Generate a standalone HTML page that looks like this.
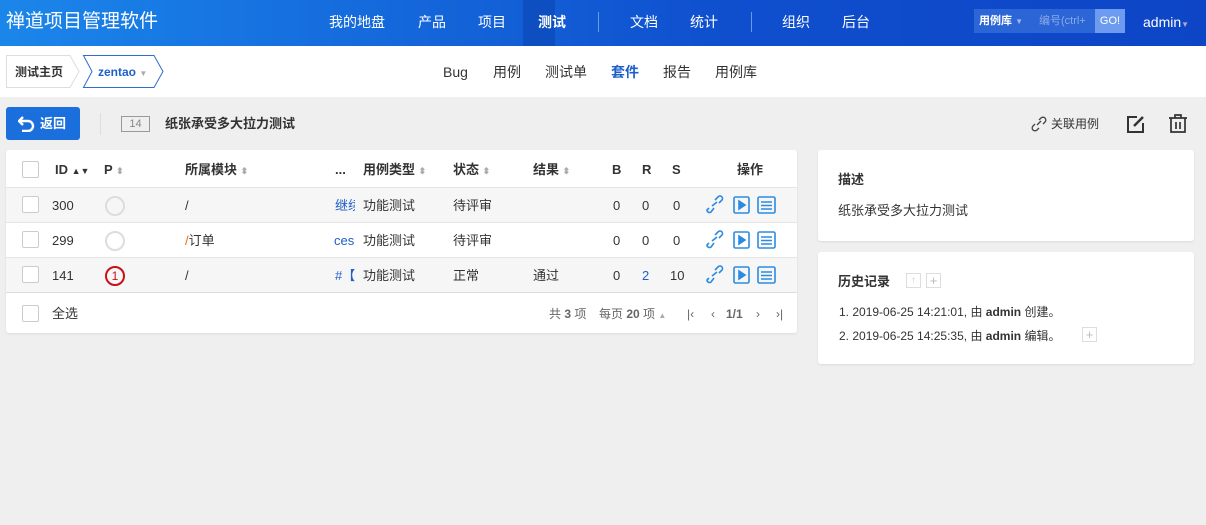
<!DOCTYPE html>
<html><head><meta charset="utf-8"><style>
*{margin:0;padding:0;box-sizing:border-box}
body{width:1206px;height:525px;background:#efefef;font-family:"Liberation Sans","Noto Sans CJK SC",sans-serif;font-size:13px;line-height:16px;color:#333;position:relative;overflow:hidden}
.abs{position:absolute}
#hd{left:0;top:0;width:1206px;height:46px;background:linear-gradient(90deg,#1b86ea,#0f4fce 60%,#0d45c6)}
#hd .t{color:#fff;font-size:14px;top:13px;line-height:18px}
#sub{left:0;top:46px;width:1206px;height:51px;background:#fff}
.panel{background:#fff;border-radius:3px;box-shadow:0 1px 2px rgba(0,0,0,.08)}
.cb{position:absolute;width:17px;height:17px;border:1px solid #ccc;border-radius:2px;background:#fff}
.row{position:absolute;left:0;width:791px;height:35px;border-top:1px solid #e5e5e5}
.row span{position:absolute;top:10px}
.sort{color:#aaa;font-size:9px}
</style></head><body>
<div id="hd" class="abs">
 <div class="abs" style="left:6px;top:11px;color:#fff;font-size:19px;line-height:22px">禅道项目管理软件</div>
 <div class="abs t" style="left:329px">我的地盘</div>
 <div class="abs t" style="left:418px">产品</div>
 <div class="abs t" style="left:478px">项目</div>
 <div class="abs" style="left:523px;top:0;width:32px;height:46px;background:#0d4fc0"></div>
 <div class="abs t" style="left:538px;font-weight:bold">测试</div>
 <div class="abs" style="left:598px;top:12px;width:1px;height:20px;background:#6a9ae8"></div>
 <div class="abs t" style="left:630px">文档</div>
 <div class="abs t" style="left:690px">统计</div>
 <div class="abs" style="left:751px;top:12px;width:1px;height:20px;background:#6a9ae8"></div>
 <div class="abs t" style="left:782px">组织</div>
 <div class="abs t" style="left:842px">后台</div>
 <div class="abs" style="left:974px;top:9px;width:151px;height:24px;background:#2c65d6"></div>
 <div class="abs" style="left:979px;top:14px;color:#fff;font-size:11px;font-weight:bold;line-height:14px">用例库 <span style="color:#9bb8ee;font-size:8px">▼</span></div>
 <div class="abs" style="left:1039px;top:14px;color:#8aa9e8;font-size:11px;line-height:14px">编号(ctrl+</div>
 <div class="abs" style="left:1095px;top:9px;width:30px;height:24px;background:#6d9bef;color:#fff;font-size:11px;text-align:center;line-height:24px">GO!</div>
 <div class="abs" style="left:1143px;top:13px;color:#fff;font-size:14px;line-height:18px">admin<span style="font-size:8px;color:#aac">▼</span></div>
</div>
<div id="sub" class="abs">
 <svg class="abs" style="left:0;top:0" width="180" height="51"><path d="M6.5 9.5 H70 L79 25.5 L70 41.5 H6.5 Z" fill="#fff" stroke="#ddd"/><path d="M83.5 9.5 H154 L163 25.5 L154 41.5 H83.5 L92 25.5 Z" fill="#fff" stroke="#2f6bd1"/></svg>
 <div class="abs" style="left:15px;top:18px;font-size:12px;font-weight:bold">测试主页</div>
 <div class="abs" style="left:98px;top:18px;font-size:12px;font-weight:bold;color:#1e5fc8">zentao <span style="color:#aaa;font-size:8px">▼</span></div>
 <div class="abs" style="left:443px;top:18px;font-size:14px">Bug</div>
 <div class="abs" style="left:493px;top:18px;font-size:14px">用例</div>
 <div class="abs" style="left:545px;top:18px;font-size:14px">测试单</div>
 <div class="abs" style="left:611px;top:18px;font-size:14px;font-weight:bold;color:#1e5fc8">套件</div>
 <div class="abs" style="left:663px;top:18px;font-size:14px">报告</div>
 <div class="abs" style="left:715px;top:18px;font-size:14px">用例库</div>
</div>
<div class="abs" style="left:6px;top:107px;width:74px;height:33px;background:#1a6fdc;border-radius:3px;color:#fff;font-size:13px;font-weight:bold;line-height:33px;padding-left:34px">返回</div>
<svg class="abs" style="left:18px;top:115px" width="18" height="17"><path d="M5 2 L1 6 L5 10 M1 6 H10 A5 5 0 0 1 10 16 H4" fill="none" stroke="#fff" stroke-width="2.4"/></svg>
<div class="abs" style="left:100px;top:113px;width:1px;height:22px;background:#ddd"></div>
<div class="abs" style="left:121px;top:116px;width:29px;height:16px;border:1px solid #999;color:#888;font-size:11px;text-align:center;line-height:14px">14</div>
<div class="abs" style="left:165px;top:116px;font-weight:bold;font-size:13px">纸张承受多大拉力测试</div>
<svg class="abs" style="left:1031px;top:116px" width="16" height="16"><path d="M6 9 L10 5 M4 8 L2 10 A2.5 2.5 0 0 0 6 14 L8 12 M8 4 L10 2 A2.5 2.5 0 0 1 14 6 L12 8" fill="none" stroke="#444" stroke-width="1.3"/></svg>
<div class="abs" style="left:1051px;top:116px;font-size:12px">关联用例</div>
<svg class="abs" style="left:1126px;top:114px" width="20" height="20"><path d="M11 3 H2 V18 H17 V9" fill="none" stroke="#333" stroke-width="2"/><path d="M8 12 L17 3" stroke="#333" stroke-width="2.5"/></svg>
<svg class="abs" style="left:1168px;top:113px" width="20" height="21"><path d="M1 5 H19 M7 5 V2 H13 V5 M3 5 V19 H17 V5 M8 9 V16 M12 9 V16" fill="none" stroke="#333" stroke-width="1.7"/></svg>

<div class="abs panel" style="left:6px;top:150px;width:791px;height:183px">
 <div class="cb" style="left:16px;top:11px"></div>
 <div class="abs" style="top:12px;left:49px;font-weight:bold">ID <span style="font-size:9px">▲▼</span></div>
 <div class="abs" style="top:12px;left:98px;font-weight:bold">P <span class="sort">⬍</span></div>
 <div class="abs" style="top:12px;left:179px;font-weight:bold">所属模块 <span class="sort">⬍</span></div>
 <div class="abs" style="top:12px;left:329px;font-weight:bold">...</div>
 <div class="abs" style="top:12px;left:357px;font-weight:bold">用例类型 <span class="sort">⬍</span></div>
 <div class="abs" style="top:12px;left:447px;font-weight:bold">状态 <span class="sort">⬍</span></div>
 <div class="abs" style="top:12px;left:527px;font-weight:bold">结果 <span class="sort">⬍</span></div>
 <div class="abs" style="top:12px;left:606px;font-weight:bold">B</div>
 <div class="abs" style="top:12px;left:636px;font-weight:bold">R</div>
 <div class="abs" style="top:12px;left:666px;font-weight:bold">S</div>
 <div class="abs" style="top:12px;left:731px;font-weight:bold">操作</div>

 <div class="row" style="top:37px;background:#f6f6f6">
  <div class="cb" style="left:16px;top:8px"></div>
  <span style="left:46px">300</span><div class="abs" style="left:99px;top:8px;width:20px;height:20px;border:2px solid #ddd;border-radius:50%"></div>
  <span style="left:179px">/</span><span style="left:329px;color:#1e5fc8;width:20px;overflow:hidden;white-space:nowrap">继续</span>
  <span style="left:357px">功能测试</span><span style="left:447px">待评审</span>
  <span style="left:607px">0</span><span style="left:636px">0</span><span style="left:667px">0</span>
 </div>
 <div class="row" style="top:72px">
  <div class="cb" style="left:16px;top:8px"></div>
  <span style="left:46px">299</span><div class="abs" style="left:99px;top:8px;width:20px;height:20px;border:2px solid #ddd;border-radius:50%"></div>
  <span style="left:179px"><span style="position:static;color:#e07020">/</span>订单</span><span style="left:328px;color:#1e5fc8">ces</span>
  <span style="left:357px">功能测试</span><span style="left:447px">待评审</span>
  <span style="left:607px">0</span><span style="left:636px">0</span><span style="left:667px">0</span>
 </div>
 <div class="row" style="top:107px;background:#f6f6f6">
  <div class="cb" style="left:16px;top:8px"></div>
  <span style="left:46px">141</span><div class="abs" style="left:99px;top:8px;width:20px;height:20px;border:2px solid #c81018;border-radius:50%;color:#c81018;font-size:12px;text-align:center;line-height:16px">1</div>
  <span style="left:179px">/</span><span style="left:329px;color:#1e5fc8">#【</span>
  <span style="left:357px">功能测试</span><span style="left:447px">正常</span><span style="left:527px">通过</span>
  <span style="left:607px">0</span><span style="left:636px;color:#1e5fc8">2</span><span style="left:664px">10</span>
 </div>
 <div class="row" style="top:142px;height:41px;border-top:1px solid #ddd">
  <div class="cb" style="left:16px;top:12px"></div>
  <span style="left:46px;top:13px">全选</span>
  <span style="left:543px;top:13px;color:#666;font-size:12px">共 <b>3</b> 项</span>
  <span style="left:593px;top:13px;color:#666;font-size:12px">每页 <b>20</b> 项 <span style="position:static;font-size:8px;color:#aaa">▲</span></span>
  <span style="left:681px;top:13px;color:#666;font-size:12px">|‹</span>
  <span style="left:705px;top:13px;color:#666;font-size:12px">‹</span>
  <span style="left:720px;top:13px;color:#666;font-size:12px"><b>1/1</b></span>
  <span style="left:750px;top:13px;color:#666;font-size:12px">›</span>
  <span style="left:770px;top:13px;color:#666;font-size:12px">›|</span>
 </div>
</div>
<svg class="abs" style="left:706px;top:195px" width="72" height="90">
 <g id="ic" fill="none" stroke="#2b8be0" stroke-width="1.6">
  <path d="M3 13 L1 15 A2.5 2.5 0 0 0 5 17 L8 13 M9 5 L12 2 A2.5 2.5 0 0 1 16 5 L13 8 M6 11 L11 7"/>
  <rect x="28" y="2" width="15" height="16" rx="1.5"/><path d="M33 6 L39 10 L33 14Z" fill="#2b8be0"/>
  <rect x="52" y="2" width="17" height="16" rx="1.5"/><path d="M55 7 H66 M55 10.5 H66 M55 14 H66"/>
 </g>
 <use href="#ic" y="35"/><use href="#ic" y="70"/>
</svg>

<div class="abs panel" style="left:818px;top:150px;width:376px;height:91px">
 <div class="abs" style="left:20px;top:22px;font-weight:bold">描述</div>
 <div class="abs" style="left:20px;top:53px">纸张承受多大拉力测试</div>
</div>
<div class="abs panel" style="left:818px;top:252px;width:376px;height:112px">
 <div class="abs" style="left:20px;top:22px;font-weight:bold">历史记录</div>
 <div class="abs" style="left:88px;top:21px;width:15px;height:15px;border:1px solid #ddd;color:#ccc;font-size:10px;text-align:center;line-height:13px">↑</div>
 <div class="abs" style="left:108px;top:21px;width:15px;height:15px;border:1px solid #ddd;color:#bbb;font-size:13px;text-align:center;line-height:13px">+</div>
 <div class="abs" style="left:21px;top:52px;font-size:12px">1. 2019-06-25 14:21:01, 由 <b>admin</b> 创建。</div>
 <div class="abs" style="left:21px;top:76px;font-size:12px">2. 2019-06-25 14:25:35, 由 <b>admin</b> 编辑。</div>
 <div class="abs" style="left:264px;top:75px;width:15px;height:15px;border:1px solid #ddd;color:#bbb;font-size:13px;text-align:center;line-height:13px">+</div>
</div>
</body></html>
